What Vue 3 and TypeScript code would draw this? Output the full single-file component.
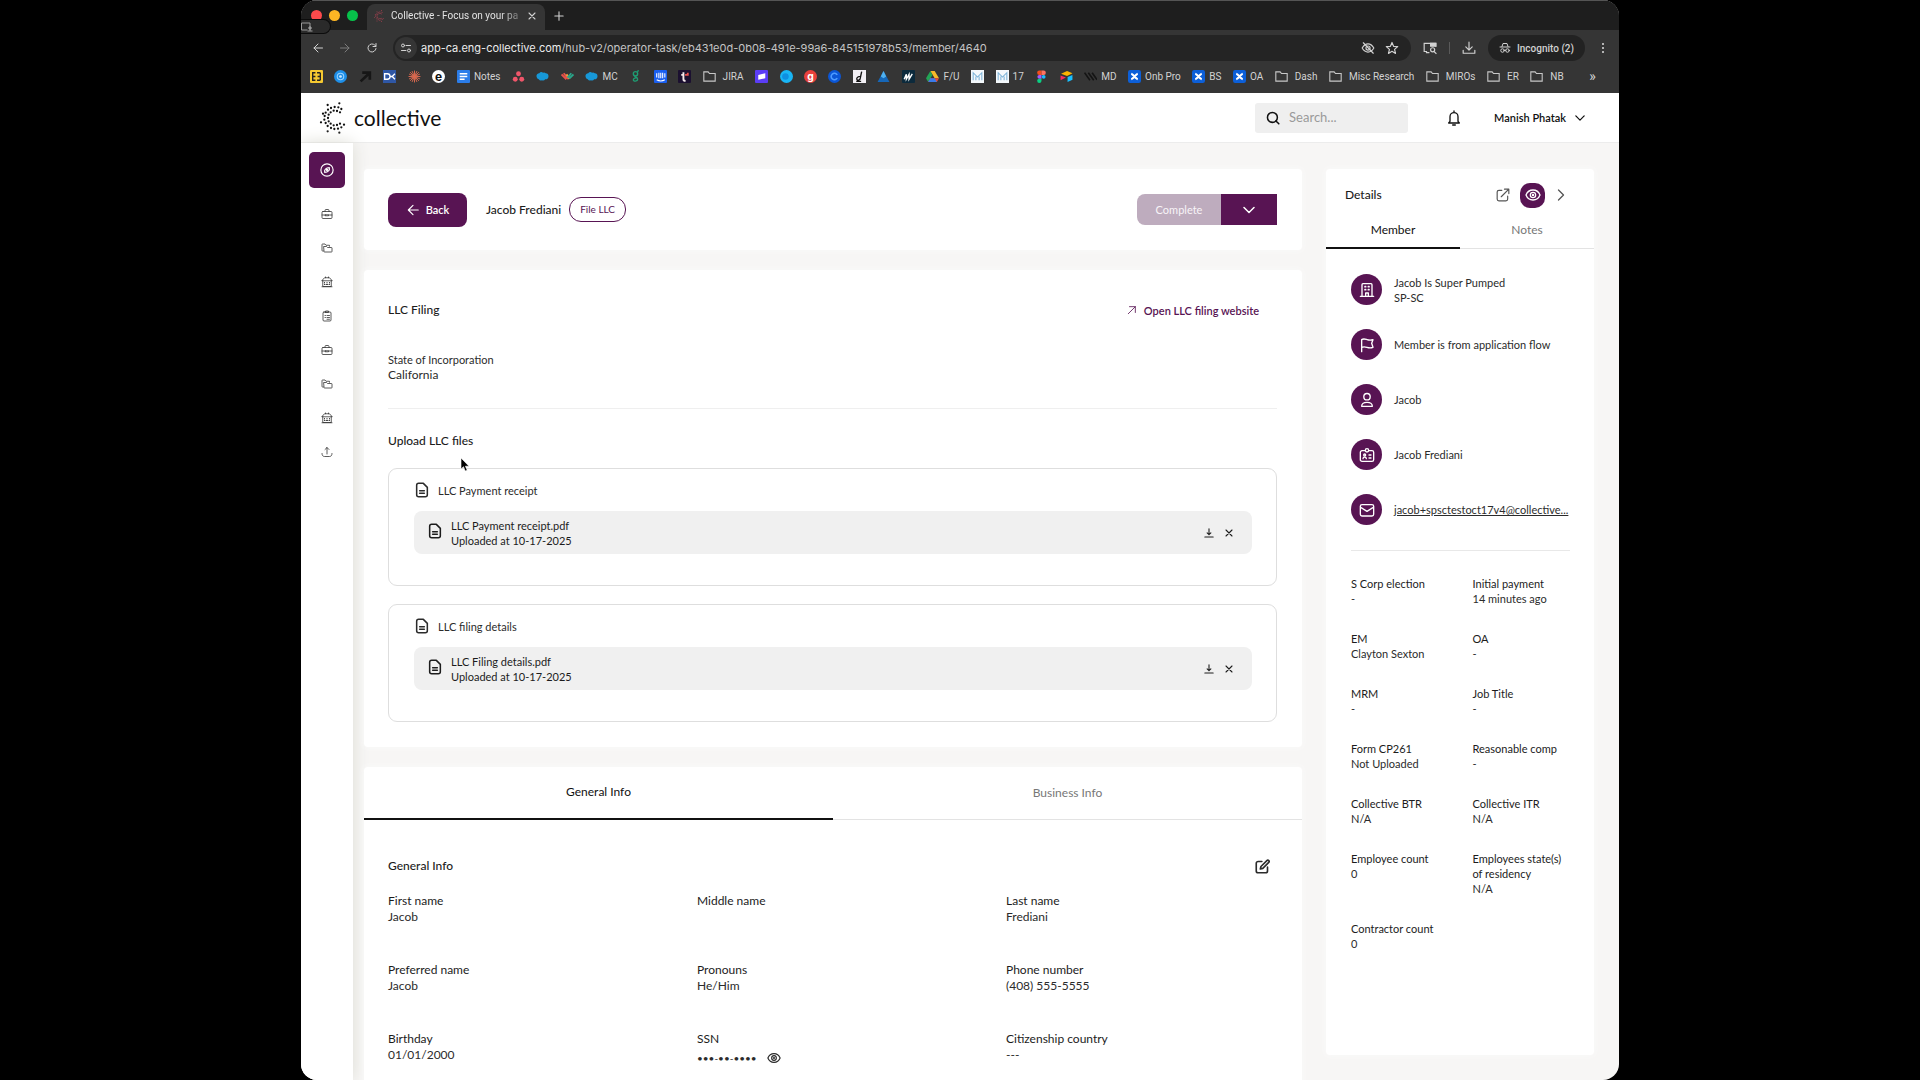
<script setup lang="ts">
import { h } from 'vue'

const stroke = (w: number) => `fill="none" stroke="currentColor" stroke-width="${w}" stroke-linecap="round" stroke-linejoin="round"`
const line = stroke(2)
const thin = stroke(1.6)
const bold = stroke(2.6)

const icons: Record<string, string> = {
  // browser chrome
  back: `<path ${line} d="M21 12H4M12 4l-8 8 8 8"/>`,
  forward: `<path ${line} d="M3 12h17M12 4l8 8-8 8"/>`,
  reload: `<path ${line} d="M20 13a8 8 0 1 1-2.300-6.700L20 8.500M20 3v6h-6"/>`,
  close: `<path ${stroke(3.2)} d="M3 3l18 18M21 3L3 21"/>`,
  plus: `<path ${bold} d="M12 2v20M2 12h20"/>`,
  tune: `<g ${line}><circle cx="6" cy="7" r="3"/><path d="M12 7h9M3 17h9"/><circle cx="18" cy="17" r="3"/></g>`,
  eyeoff: `<g ${line}><path d="M2 12c3-5 6-7 10-7s7 2 10 7c-3 5-6 7-10 7s-7-2-10-7z"/><circle cx="12" cy="12" r="3.500"/><path d="M4 3l17 18"/></g>`,
  star: `<path ${line} d="M12 2.500l2.700 6.600 7.100.600-5.400 4.700 1.600 7-6-3.700-6 3.700 1.600-7-5.400-4.700 7.100-.600z"/>`,
  panel: `<g fill="none" stroke="currentColor" stroke-width="2"><path d="M11 20H6v-2H2V4h20v6"/><path d="M13 4h9v5h-9z" fill="currentColor"/><circle cx="16.500" cy="15" r="3.500"/><path d="M19 18l4 4"/></g>`,
  tray: `<path ${line} d="M12 2v13M6.500 10l5.500 5.500 5.500-5.500M2 16v5h20v-5"/>`,
  incognito: `<g ${line}><path d="M6 9l2-6h8l2 6M2 10h20"/><circle cx="7" cy="17" r="3.500"/><circle cx="17" cy="17" r="3.500"/><path d="M10.500 16.500h3"/></g>`,
  dots: `<g fill="currentColor"><circle cx="12" cy="4" r="2.200"/><circle cx="12" cy="12" r="2.200"/><circle cx="12" cy="20" r="2.200"/></g>`,
  screen: `<g fill="none" stroke="#9a9a9a" stroke-width="2"><path d="M1 4h17v8M1 4v14h12M13 20h10"/><circle cx="18" cy="14" r="2.500" fill="#9a9a9a"/><path d="M18 16v4"/></g>`,
  // application
  search: `<g ${bold}><circle cx="11" cy="11" r="8.500"/><path d="M17 17l5 5"/></g>`,
  bell: `<path ${line} d="M12 1.500v2M6 17V10a6 6 0 0 1 12 0v7l2 2.500H4zM10 22.500h4"/>`,
  down: `<path ${stroke(3)} d="M2 7l10 10L22 7"/>`,
  right: `<path ${bold} d="M7 2l10 10L7 22"/>`,
  compass: `<g ${line}><circle cx="12" cy="12" r="10.500"/><path d="M8 16c-1-4 2-8 8-8 1 4-2 8-8 8z"/><circle cx="12" cy="12" r="1"/></g>`,
  case: `<g ${thin}><rect x="2" y="7" width="20" height="14" rx="2"/><path d="M8 7V5a2 2 0 0 1 2-2h4a2 2 0 0 1 2 2v2M2 14h7M15 14h7M9 13.500h6v2H9z"/></g>`,
  folders: `<g ${thin}><path d="M5 18H3a1 1 0 0 1-1-1V5a1 1 0 0 1 1-1h5l2 2.500h7v2"/><path d="M6 9h5l2 2h8a1 1 0 0 1 1 1v7a1 1 0 0 1-1 1H7a1 1 0 0 1-1-1z"/></g>`,
  bank: `<g ${thin}><path d="M2 9l5-5.500h10L22 9z"/><path d="M3.500 9v12h17V9M2 21.500h20M9 3.500V2M15 3.500V2"/><path d="M7 13v1M12 13v1M17 13v1M7 17h1M11 17h2M16 17h1" stroke-width="2"/></g>`,
  clipboard: `<g ${thin}><rect x="4" y="4" width="16" height="18" rx="2"/><path d="M9 4V2h6v3H9zM8 11h1M12 11h5M8 15h1M12 15h5M12 18.500h5"/></g>`,
  share: `<path ${thin} d="M12 16V3M8 7l4-4 4 4M2 15c0 4 2 6 5 6h10c3 0 5-2 5-6"/>`,
  arrowup: `<path ${line} d="M3 21L20 4M6 4h14v14"/>`,
  doc: `<path ${stroke(2.3)} d="M14 2H7a3 3 0 0 0-3 3v14a3 3 0 0 0 3 3h10a3 3 0 0 0 3-3V8zM8.500 13h7M8.500 17h7"/>`,
  download: `<path ${bold} d="M12 2v14M7.500 11.500l4.500 4.500 4.500-4.500M2 21.500h20"/>`,
  edit: `<path ${bold} d="M11 4H5a3 3 0 0 0-3 3v12a3 3 0 0 0 3 3h12a3 3 0 0 0 3-3v-6M8.500 16l1-4L19 2.500a1.800 1.800 0 0 1 3 3L12.500 15z"/>`,
  eye: `<g ${line}><path d="M1.500 12c2-5 6-7.500 10.500-7.500s8.500 2.500 10.500 7.500c-2 5-6 7.500-10.500 7.500S3.500 17 1.500 12z"/><circle cx="12" cy="12" r="4"/><circle cx="12" cy="12" r=".8"/></g>`,
  external: `<path ${line} d="M10 4H5a3 3 0 0 0-3 3v12a3 3 0 0 0 3 3h12a3 3 0 0 0 3-3v-5M9 15L22 2M14.500 2H22v7.500"/>`,
  building: `<g ${line}><path d="M4.500 21V4a1.500 1.500 0 0 1 1.500-1.500h12A1.500 1.500 0 0 1 19.500 4v17M2 21.500h20M10 21v-4.500h4V21"/><path d="M9 7h1M14 7h1M9 11.500h1M14 11.500h1" stroke-width="2.500"/></g>`,
  flag: `<path ${line} d="M4 22V4c3-2 5-1 8 0s5 1.500 9 0l-2 5.500 2 6c-4 1.500-6 1-9 0s-5-1.500-8 0"/>`,
  person: `<g ${line}><circle cx="12" cy="7" r="4.800"/><path d="M4 21.500c0-4.500 3-6 8-6s8 1.500 8 6z"/></g>`,
  badge: `<g ${line}><path d="M9.500 5.500H4.500A2.500 2.500 0 0 0 2 8v11a2.500 2.500 0 0 0 2.500 2.500h15A2.500 2.500 0 0 0 22 19V8a2.500 2.500 0 0 0-2.500-2.500h-5"/><circle cx="12" cy="5" r="2.500"/><circle cx="8.500" cy="12" r="1.500"/><path d="M6 17.500c0-3 5-3 5 0M15 12h3M15 16.500h3"/></g>`,
  mail: `<g ${line}><rect x="2" y="4" width="20" height="17" rx="2.500"/><path d="M2.500 8l9.500 6 9.500-6"/></g>`,
}

const glyph = (c: string, fill: string, size = 17, weight = 700) =>
  `<text x="12" y="${12 + size * 0.34}" text-anchor="middle" font-family="Inter, sans-serif" font-size="${size}" font-weight="${weight}" fill="${fill}">${c}</text>`
const tile = (fill: string, inner = '', r = 2) => `<rect width="24" height="24" rx="${r}" fill="${fill}"/>${inner}`
const disc = (fill: string, inner = '') => `<circle cx="12" cy="12" r="12" fill="${fill}"/>${inner}`
const cloud = '<path fill="#1798d8" d="M1 12a5 5 0 0 1 5-6 5 5 0 0 1 7-1 5 5 0 0 1 5 1 5.500 5.500 0 0 1 5 6 5 5 0 0 1-6 5 5 5 0 0 1-6 2 5 5 0 0 1-6-2 5 5 0 0 1-4-5z"/>'
const folder = '<path fill="none" stroke="#c8c8c8" stroke-width="2" d="M1.500 20.500v-17h8l2.500 3h10.500v14z"/>'
const confluence = tile('#0c5fd8', '<path stroke="#fff" stroke-width="4" fill="none" d="M6 7c4 1 8 9 12 10M6 17c4-1 8-9 12-10"/>', 4)
const mural = tile('#f4f8fb', '<path fill="none" stroke="#7fb4d8" stroke-width="2" d="M4 19V5l8 8 8-8v14M9 12v7M15 12v7"/>', 0)

const bookmarks: { art: string; label?: string }[] = [
  { art: tile('#f5c931', '<path fill="none" stroke="#222" stroke-width="2.500" d="M10 5H5v14h5M5 12h5M13 5h6M14 12h5M13 19h6M19 5v14"/>') },
  { art: disc('#1e8fe8', '<circle cx="12" cy="12" r="6" fill="none" stroke="#9ad4ff" stroke-width="2"/><circle cx="12" cy="12" r="2.500" fill="#cfe9ff"/>') },
  { art: '<path fill="none" stroke="#161616" stroke-width="5" d="M3 21L19 6M6 5h14v13"/>' },
  { art: tile('#2f57a5', '<path fill="none" stroke="#fff" stroke-width="2.500" d="M3 7h5a5 5 0 0 1 0 10H3zM13 12h4M22 7l-5 5 5 5"/>', 0) },
  { art: '<path stroke="#d9694f" stroke-width="1.800" d="M12 1v22M1 12h22M4 4l16 16M20 4L4 20M7.500 2l9 20M2 7.500l20 9M16.500 2l-9 20M22 7.500l-20 9"/>' },
  { art: disc('#fff', glyph('e', '#111', 22)) },
  { art: tile('#2b7de9', '<path stroke="#fff" stroke-width="2.500" d="M5 7h14M5 12h14M5 17h9"/>'), label: 'Notes' },
  { art: '<g fill="#f0566a"><circle cx="12" cy="7" r="4.500"/><circle cx="6" cy="17" r="4.500"/><circle cx="18" cy="17" r="4.500"/></g>' },
  { art: cloud },
  { art: '<g fill="none" stroke-width="3.500"><path stroke="#e8534a" d="M1 8l9 9M5 6l9 11"/><path stroke="#f0a63c" d="M10 8l6 8"/><path stroke="#2aa58a" d="M12 14l7-8M15 16l8-8"/></g>' },
  { art: cloud, label: 'MC' },
  { art: '<g fill="none" stroke="#1f9c72" stroke-width="2.500"><circle cx="12" cy="7" r="4"/><path d="M15 3l3-2M12 11c-4 2 4 2 4 6s-8 5-8 1 6-3 7-5"/></g>' },
  { art: tile('#1a5ff0', '<path fill="none" stroke="#fff" stroke-width="2" d="M5 6v8M9 5v10M12.500 5v10M16 5v10M20 6v8M5 18c5 3 10 3 15 0"/>') },
  { art: tile('#1b1030', '<path fill="none" stroke="#f4e9ea" stroke-width="3.500" d="M10 4v13q0 3 4 3M6 9h5"/><path stroke="#e85050" stroke-width="3.500" d="M13 9h5V5"/>') },
  { art: folder, label: 'JIRA' },
  { art: tile('#5b3df5', '<path fill="#fff" d="M6 9l13-3v9L6 18z"/>') },
  { art: disc('#19b5f5', '<circle cx="10" cy="12" r="6" fill="#0e8fe0"/>') },
  { art: disc('#e8413c', glyph('g', '#fff', 19)) },
  { art: disc('#0b56d6', '<path fill="none" stroke="#4d9bff" stroke-width="3" d="M17 9a6 6 0 1 0 0 6"/>') },
  { art: tile('#f2f0f5', '<path fill="none" stroke="#111" stroke-width="2.500" d="M16 3l-3 14q-5 4-6 0t8-6M6 21h9"/>', 0) },
  { art: '<path fill="#1667b8" d="M12 2l11 20H1z"/><path fill="#4fb0ee" d="M12 2l5 10-5 3-5-3z"/>' },
  { art: tile('#0c2a3c', '<path fill="none" stroke="#fff" stroke-width="2.500" d="M4 17l4-9v9l5-9v9l6-10"/>') },
  { art: '<path fill="#f7b928" d="M8 2h8l8 13h-8z"/><path fill="#23a455" d="M8 2l4 7-8 13-4-7z"/><path fill="#e34a3a" d="M8 15h16l-4 7H4z"/><path fill="#3a7bea" d="M8 15h8l4 7H4z"/>', label: 'F/U' },
  { art: mural },
  { art: mural, label: '17' },
  { art: '<path fill="#f24e1e" d="M12 1v8H8a4 4 0 0 1 0-8z"/><path fill="#ff7262" d="M12 1h4a4 4 0 0 1 0 8h-4z"/><path fill="#a259ff" d="M12 9v7H8a3.500 3.500 0 0 1 0-7z"/><circle cx="16" cy="12.500" r="3.500" fill="#1abcfe"/><path fill="#0acf83" d="M12 16v4a4 4 0 1 1-4-4z"/>' },
  { art: '<path fill="#fcb400" d="M2 7l11-5 10 4-10 5z"/><path fill="#18bfff" d="M14 13l9-4v9l-9 4z"/><path fill="#f82b60" d="M1 10l10 4-10 5z"/>' },
  { art: '<path stroke="#141414" stroke-width="3" d="M1 5l10 14M8 5l10 14M15 5l9 13"/>', label: 'MD' },
  { art: confluence, label: 'Onb Pro' },
  { art: confluence, label: 'BS' },
  { art: confluence, label: 'OA' },
  { art: folder, label: 'Dash' },
  { art: folder, label: 'Misc Research' },
  { art: folder, label: 'MIROs' },
  { art: folder, label: 'ER' },
  { art: folder, label: 'NB' },
]

// Dotted "C" mark: two rings of dots open towards the right, plus loose outer dots.
const ring = (r: number, step: number, from: number) => {
  const out: number[][] = []
  for (let a = from; a <= 360 - from; a += step) {
    const t = (a * Math.PI) / 180
    out.push([Math.round(91 + r * Math.cos(t)), Math.round(66 + r * Math.sin(t))])
  }
  return out
}
const mark = [
  ...ring(22, 26, 50),
  ...ring(33, 19, 38),
  [68, 27], [103, 22], [54, 53], [48, 79], [68, 106], [103, 110],
]
  .map(([x, y]) => `<circle cx="${x}" cy="${y}" r="3.400" fill="currentColor"/>`)
  .join('')

const Ico = (p: { name: string }) => h('svg', { viewBox: '0 0 24 24', 'aria-hidden': 'true', innerHTML: icons[p.name] })
const Art = (p: { art: string }) => h('svg', { viewBox: '0 0 24 24', 'aria-hidden': 'true', innerHTML: p.art })
const Mark = () => h('svg', { viewBox: '42 18 84 96', 'aria-hidden': 'true', innerHTML: mark })

const nav = ['case', 'folders', 'bank', 'clipboard', 'case', 'folders', 'bank', 'share']

const uploads = [
  { title: 'LLC Payment receipt', file: 'LLC Payment receipt.pdf', at: 'Uploaded at 10-17-2025' },
  { title: 'LLC filing details', file: 'LLC Filing details.pdf', at: 'Uploaded at 10-17-2025' },
]

const info = [
  { label: 'First name', value: 'Jacob' },
  { label: 'Middle name', value: '' },
  { label: 'Last name', value: 'Frediani' },
  { label: 'Preferred name', value: 'Jacob' },
  { label: 'Pronouns', value: 'He/Him' },
  { label: 'Phone number', value: '(408) 555-5555' },
  { label: 'Birthday', value: '01/01/2000' },
  { label: 'SSN', value: '•••-••-••••', secret: true },
  { label: 'Citizenship country', value: '---' },
]

const contacts = [
  { icon: 'building', text: 'Jacob Is Super Pumped', sub: 'SP-SC' },
  { icon: 'flag', text: 'Member is from application flow' },
  { icon: 'person', text: 'Jacob' },
  { icon: 'badge', text: 'Jacob Frediani' },
  { icon: 'mail', text: 'jacob+spsctestoct17v4@collective...', link: true },
]

const facts = [
  { label: 'S Corp election', value: '-' },
  { label: 'Initial payment', value: '14 minutes ago' },
  { label: 'EM', value: 'Clayton Sexton' },
  { label: 'OA', value: '-' },
  { label: 'MRM', value: '-' },
  { label: 'Job Title', value: '-' },
  { label: 'Form CP261', value: 'Not Uploaded' },
  { label: 'Reasonable comp', value: '-' },
  { label: 'Collective BTR', value: 'N/A' },
  { label: 'Collective ITR', value: 'N/A' },
  { label: 'Employee count', value: '0' },
  { label: 'Employees state(s) of residency', value: 'N/A' },
  { label: 'Contractor count', value: '0' },
]
</script>

<template>
  <div class="desktop">
    <div class="window">
      <header class="chrome">
        <div class="tabstrip">
          <span class="light red"></span><span class="light amber"></span><span class="light green"></span>
          <div class="tab">
            <Mark class="favicon" />
            <span class="tab-title">Collective - Focus on your pa</span>
            <button class="bare" aria-label="Close tab"><Ico name="close" class="s8" /></button>
          </div>
          <button class="bare" aria-label="New tab"><Ico name="plus" class="s10" /></button>
        </div>
        <div class="toolbar">
          <div class="history">
            <button class="bare" aria-label="Back"><Ico name="back" class="s12" /></button>
            <button class="bare faded" aria-label="Forward"><Ico name="forward" class="s12" /></button>
            <button class="bare" aria-label="Reload"><Ico name="reload" class="s12" /></button>
          </div>
          <div class="omnibox">
            <span class="site"><Ico name="tune" class="s12" /></span>
            <span class="url"><b>app-ca.eng-collective.com</b>/hub-v2/operator-task/eb431e0d-0b08-491e-99a6-845151978b53/member/4640</span>
            <Ico name="eyeoff" class="s14" />
            <Ico name="star" class="s14" />
          </div>
          <Ico name="panel" class="s14" />
          <span class="bar"></span>
          <Ico name="tray" class="s14" />
          <button class="incognito"><Ico name="incognito" class="s12" />Incognito (2)</button>
          <button class="bare" aria-label="Menu"><Ico name="dots" class="s12" /></button>
        </div>
        <nav class="bookmarks">
          <a v-for="(b, i) in bookmarks" :key="i" href="#" :class="{ folder: b.art === folder }"><Art :art="b.art" class="s13" /><span v-if="b.label">{{ b.label }}</span></a>
          <span class="more">»</span>
        </nav>
        <span class="sharing"><Ico name="screen" class="s12" /></span>
      </header>

      <div class="topbar">
        <a class="brand" href="#"><Mark class="logo" />collective</a>
        <label class="search"><Ico name="search" class="s14" /><input type="text" placeholder="Search..." aria-label="Search" /></label>
        <button class="bare bell" aria-label="Notifications"><Ico name="bell" class="s16" /></button>
        <button class="bare user">Manish Phatak<Ico name="down" class="s10" /></button>
      </div>

      <div class="body">
        <nav class="sidebar">
          <a class="active" href="#" aria-label="Home"><Ico name="compass" class="s14" /></a>
          <a v-for="(n, i) in nav" :key="i" href="#" :aria-label="n"><Ico :name="n" class="s12" /></a>
        </nav>

        <main class="main">
          <section class="card head">
            <button class="primary"><Ico name="back" class="s14" />Back</button>
            <h1>Jacob Frediani</h1>
            <span class="pill">File LLC</span>
            <div class="split">
              <button class="complete" disabled>Complete</button>
              <button class="menu" aria-label="More actions"><Ico name="down" class="s12" /></button>
            </div>
          </section>

          <section class="card filing">
            <div class="row">
              <h2>LLC Filing</h2>
              <a class="open" href="#"><Ico name="arrowup" class="s10" />Open LLC filing website</a>
            </div>
            <div class="state"><small>State of Incorporation</small><span>California</span></div>
            <h2 class="upload-title">Upload LLC files</h2>
            <article v-for="u in uploads" :key="u.title" class="upload">
              <div class="upload-name"><Ico name="doc" class="s16" />{{ u.title }}</div>
              <div class="file">
                <Ico name="doc" class="s16 file-icon" />
                <div class="file-text"><span>{{ u.file }}</span><span>{{ u.at }}</span></div>
                <button class="bare" aria-label="Download"><Ico name="download" class="s10" /></button>
                <button class="bare" aria-label="Remove"><Ico name="close" class="s8" /></button>
              </div>
            </article>
          </section>

          <section class="card info">
            <div class="tabs">
              <button class="on">General Info</button>
              <button>Business Info</button>
            </div>
            <div class="info-body">
              <div class="row">
                <h2>General Info</h2>
                <button class="bare edit" aria-label="Edit"><Ico name="edit" class="s15" /></button>
              </div>
              <dl>
                <div v-for="f in info" :key="f.label">
                  <dt>{{ f.label }}</dt>
                  <dd :class="{ secret: f.secret }">{{ f.value }}<button v-if="f.secret" class="bare" aria-label="Show SSN"><Ico name="eye" class="s14" /></button></dd>
                </div>
              </dl>
            </div>
          </section>
        </main>

        <aside class="card details">
          <div class="details-head">
            <h2>Details</h2>
            <button class="bare grey" aria-label="Open in new tab"><Ico name="external" class="s14" /></button>
            <button class="eye" aria-label="Watch"><Ico name="eye" class="s16" /></button>
            <button class="bare grey" aria-label="Collapse"><Ico name="right" class="s12" /></button>
          </div>
          <div class="tabs">
            <button class="on">Member</button>
            <button>Notes</button>
          </div>
          <div class="details-body">
            <ul>
              <li v-for="c in contacts" :key="c.icon">
                <span class="round"><Ico :name="c.icon" class="s16" /></span>
                <a v-if="c.link" href="#" class="mail">{{ c.text }}</a>
                <span v-else>{{ c.text }}<br v-if="c.sub" />{{ c.sub }}</span>
              </li>
            </ul>
            <dl>
              <div v-for="f in facts" :key="f.label">
                <dt>{{ f.label }}</dt>
                <dd>{{ f.value }}</dd>
              </div>
            </dl>
          </div>
        </aside>
      </div>
    </div>
    <svg class="cursor" viewBox="0 0 10 15" aria-hidden="true"><path d="M1 1v11l2.500-2.300L5.200 14l2-.8-1.800-4H9z" fill="#000" stroke="#fff" stroke-width=".6" /></svg>
  </div>
</template>

<style>
body {
  margin: 0;
  background: #000;
}
</style>

<style scoped>
.desktop {
  position: relative;
  height: 100vh;
  padding: 0 301px;
  font-family: Lato, "Noto Sans", sans-serif;
  font-size: 11px;
  line-height: 15px;
  color: #2b2b2b;
}
.desktop,
.desktop * {
  box-sizing: border-box;
}
.window {
  display: flex;
  flex-direction: column;
  height: 100%;
  overflow: hidden;
  border-radius: 16px;
  background: #f7f6f5;
}
button {
  font: inherit;
  color: inherit;
  border: 0;
  padding: 0;
}
.bare {
  display: flex;
  align-items: center;
  background: none;
}
a {
  color: inherit;
  text-decoration: none;
}
svg {
  display: block;
  flex: none;
}
h1,
h2 {
  margin: 0;
  font-size: 12px;
  font-weight: 500;
  line-height: 16px;
}
dl,
dd,
ul {
  margin: 0;
  padding: 0;
}
.s8 { width: 8px; height: 8px; }
.s10 { width: 10px; height: 10px; }
.s12 { width: 12px; height: 12px; }
.s13 { width: 13px; height: 13px; }
.s14 { width: 14px; height: 14px; }
.s15 { width: 15px; height: 15px; }
.s16 { width: 16px; height: 16px; }

/* browser chrome */
.chrome {
  position: relative;
  flex: none;
  height: 93px;
  border-top: 1px solid #555;
  background: #353535;
  color: #d2d2d2;
  font-family: Roboto, sans-serif;
  font-size: 10px;
}
.tabstrip {
  display: flex;
  align-items: center;
  height: 29px;
  padding-left: 10px;
  background: #1e1e1e;
}
.light {
  width: 11px;
  height: 11px;
  margin-right: 7px;
  border-radius: 50%;
}
.red { background: #fe4a4c; }
.amber { background: #fdb524; }
.green { background: #07c14a; }
.tab {
  display: flex;
  align-items: center;
  align-self: flex-end;
  width: 178px;
  height: 26px;
  margin: 0 9px 0 2px;
  padding: 0 9px 3px 6px;
  border-radius: 8px 8px 0 0;
  background: #353535;
}
.favicon {
  width: 12px;
  height: 12px;
  margin-right: 6px;
  color: #d8475c;
}
.tab-title {
  flex: 1;
  white-space: nowrap;
  color: #e2e2e2;
  -webkit-mask-image: linear-gradient(90deg, #000 80%, transparent);
  mask-image: linear-gradient(90deg, #000 80%, transparent);
}
.toolbar {
  display: flex;
  align-items: center;
  gap: 12px;
  height: 36px;
  padding: 0 10px 0 11px;
}
.history {
  display: flex;
  gap: 15px;
  margin-right: 3px;
}
.faded {
  opacity: .45;
}
.omnibox {
  display: flex;
  flex: 1;
  align-items: center;
  gap: 10px;
  height: 26px;
  padding: 0 12px 0 2px;
  border-radius: 13px;
  background: #242424;
}
.site {
  display: flex;
  align-items: center;
  justify-content: center;
  width: 22px;
  height: 22px;
  margin-right: -6px;
  border-radius: 50%;
  background: #353535;
}
.url {
  flex: 1;
  white-space: nowrap;
  font-family: Inter, sans-serif;
  font-size: 11px;
  color: #c4c4c4;
}
.url b {
  font-weight: 400;
  color: #ececec;
}
.bar {
  width: 1px;
  height: 12px;
  background: #5a5a5a;
}
.incognito {
  display: flex;
  align-items: center;
  justify-content: center;
  gap: 6px;
  width: 97px;
  height: 26px;
  border-radius: 13px;
  background: #222;
  font-weight: 500;
}
.bookmarks {
  display: flex;
  align-items: center;
  justify-content: space-between;
  height: 21px;
  padding: 0 23px 0 9px;
}
.bookmarks a {
  display: flex;
  align-items: center;
  gap: 4px;
  white-space: nowrap;
}
.bookmarks .folder {
  gap: 7px;
}
.more {
  padding-left: 14px;
  font-size: 14px;
}
.sharing {
  position: absolute;
  top: 18px;
  left: 0;
  display: flex;
  align-items: center;
  width: 30px;
  height: 15px;
  border: 1px solid #0c0c0c;
  border-left: 0;
  border-radius: 0 8px 8px 0;
  background: #2a2a2a;
}

/* application header */
.topbar {
  display: flex;
  flex: none;
  align-items: center;
  height: 50px;
  padding: 0 34px 0 18px;
  border-bottom: 1px solid #ececec;
  background: #fff;
  color: #111;
}
.brand {
  display: flex;
  align-items: center;
  gap: 7px;
  margin-right: auto;
  font-size: 21px;
  line-height: 24px;
}
.logo {
  width: 28px;
  height: 32px;
}
.search {
  display: flex;
  align-items: center;
  gap: 9px;
  width: 153px;
  height: 30px;
  padding: 0 11px;
  border-radius: 3px;
  background: #efefef;
}
.search input {
  width: 100%;
  min-width: 0;
  padding: 0;
  border: 0;
  background: none;
  font: inherit;
  font-size: 13px;
}
.search input::placeholder {
  color: #9a9a9a;
}
.bell {
  margin: 0 32px 0 38px;
}
.user {
  gap: 9px;
  font-weight: 600;
}

/* page */
.body {
  display: flex;
  flex: 1;
  min-height: 0;
}
.sidebar {
  display: flex;
  flex: none;
  flex-direction: column;
  align-items: center;
  gap: 22px;
  width: 52px;
  padding-top: 9px;
  background: #fff;
  box-shadow: 0 0 16px #dcdcd4;
  color: #333;
}
.sidebar .active {
  display: flex;
  align-items: center;
  justify-content: center;
  width: 36px;
  height: 36px;
  margin-bottom: -2px;
  border-radius: 5px;
  background: #581453;
  color: #fff;
}
.main {
  display: flex;
  flex: 1;
  flex-direction: column;
  gap: 20px;
  min-width: 0;
  padding: 26px 24px 0 11px;
}
.card {
  flex: none;
  border-radius: 4px;
  background: #fff;
  box-shadow: 0 0 6px #fbfbfb;
}
.head {
  display: flex;
  align-items: center;
  height: 81px;
  padding: 0 25px 0 24px;
}
.primary {
  display: flex;
  align-items: center;
  justify-content: center;
  gap: 6px;
  width: 79px;
  height: 34px;
  margin-right: 19px;
  border-radius: 8px;
  background: #581453;
  color: #fff;
  font-weight: 600;
}
.pill {
  margin-left: 8px;
  padding: 4px 10px;
  border: 1px solid #581453;
  border-radius: 12px;
  color: #581453;
  font-size: 10px;
}
.split {
  display: flex;
  height: 31px;
  margin-left: auto;
  color: #fff;
}
.complete {
  width: 84px;
  border-radius: 8px 0 0 8px;
  background: #beacbe;
  color: #f8f4f8;
}
.menu {
  display: flex;
  align-items: center;
  justify-content: center;
  width: 56px;
  background: #581453;
}
.filing {
  padding: 32px 25px 25px 24px;
}
.row {
  display: flex;
  align-items: center;
  justify-content: space-between;
}
.open {
  display: flex;
  align-items: center;
  gap: 7px;
  margin-right: 18px;
  color: #581453;
  font-weight: 600;
}
.state {
  display: flex;
  flex-direction: column;
  margin-top: 34px;
  padding-bottom: 26px;
  border-bottom: 1px solid #efefef;
  font-size: 12px;
  line-height: 15px;
}
.state small {
  font-size: 11px;
}
.upload-title {
  margin: 24px 0 19px;
}
.upload {
  padding: 13px 24px 31px 25px;
  border: 1px solid #dedede;
  border-radius: 9px;
}
.upload + .upload {
  margin-top: 18px;
}
.upload-name {
  display: flex;
  align-items: center;
  gap: 8px;
}
.file {
  display: flex;
  align-items: center;
  height: 43px;
  margin-top: 13px;
  padding: 0 19px 0 13px;
  border-radius: 8px;
  background: #f0f0f0;
  color: #1c1c1c;
}
.file .bare {
  margin-left: 11px;
}
.file-icon {
  margin: 0 8px 4px 0;
}
.file-text {
  display: flex;
  flex: 1;
  flex-direction: column;
}
.tabs {
  display: flex;
}
.tabs button {
  flex: 1;
  border-bottom: 1px solid #e3e3e3;
  background: none;
  color: #777;
  font-size: 12px;
}
.tabs .on {
  border-bottom: 2px solid #111;
  color: #111;
}
.info .tabs button {
  height: 53px;
  padding-bottom: 2px;
}
.info-body {
  padding: 38px 25px 64px 24px;
}
.edit {
  margin-right: 7px;
}
.info dl {
  display: grid;
  grid-template-columns: repeat(3, 1fr);
  gap: 37px 38px;
  margin-top: 19px;
  font-size: 12px;
  line-height: 16px;
}
.info dl div {
  min-height: 32px;
}
dt,
h1,
h2 {
  color: #1c1c1c;
}
.secret {
  display: flex;
  align-items: center;
  gap: 10px;
  height: 22px;
  font-size: 10px;
}

/* details panel */
.details {
  display: flex;
  flex-direction: column;
  width: 268px;
  margin: 26px 25px 25px 0;
}
.details-head {
  display: flex;
  align-items: center;
  gap: 10px;
  height: 52px;
  padding: 0 27px 0 19px;
}
.details-head h2 {
  margin-right: auto;
}
.eye {
  display: flex;
  align-items: center;
  justify-content: center;
  width: 25px;
  height: 25px;
  border-radius: 10px;
  background: #581453;
  color: #fff;
}
.grey {
  color: #555;
}
.details .tabs button {
  height: 28px;
  padding-bottom: 10px;
}
.details-body {
  padding: 25px 24px 0 25px;
}
ul {
  display: flex;
  flex-direction: column;
  gap: 24px;
  padding-bottom: 25px;
  border-bottom: 1px solid #e8e8e8;
  list-style: none;
}
li {
  display: flex;
  align-items: center;
  gap: 12px;
}
.round {
  display: flex;
  flex: none;
  align-items: center;
  justify-content: center;
  width: 31px;
  height: 31px;
  border-radius: 50%;
  background: #581453;
  color: #fff;
}
.mail {
  white-space: nowrap;
  text-decoration: underline;
}
.details dl {
  display: grid;
  grid-template-columns: repeat(2, 1fr);
  gap: 25px 24px;
  margin-top: 25px;
}
.cursor {
  position: absolute;
  top: 457px;
  left: 460px;
  width: 10px;
  height: 15px;
}
</style>
